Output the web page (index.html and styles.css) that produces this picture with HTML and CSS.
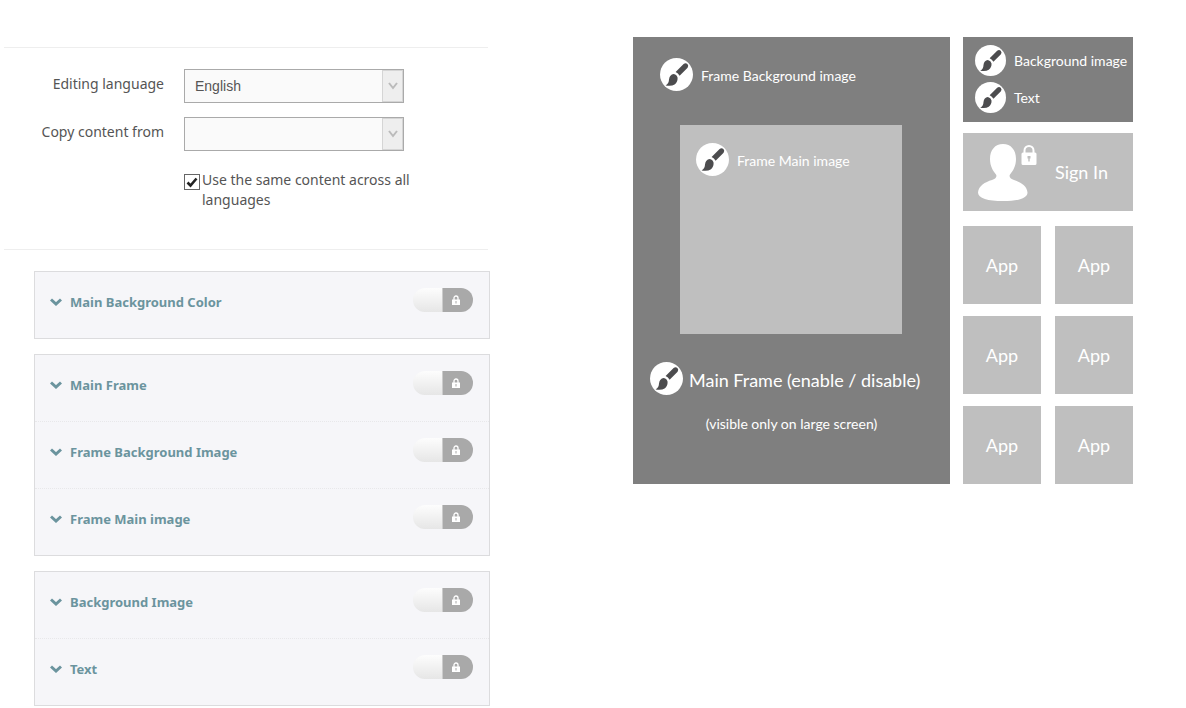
FILE: index.html
```html
<!DOCTYPE html>
<html lang="en">
<head>
  <meta charset="UTF-8">
  <meta name="viewport" content="width=device-width, initial-scale=1.0">
  <title>Appearance Settings</title>
  <link rel="stylesheet" href="styles.css">
</head>
<body>
  <!-- Shared icons -->
  <svg class="sprite" aria-hidden="true">
    <symbol id="brush" viewBox="0 0 33 33">
      <circle cx="16.500" cy="16.500" r="16.500" fill="#fff"/>
      <path d="M15.600 14 L23.600 6 Q25.600 4.500 27.400 6 Q29 7.800 27.600 9.800 L19.600 17.800 Q18.200 15.200 15.600 14 Z" fill="#4c4c4e"/>
      <path d="M13.700 16 Q17 16.800 17.600 19.700 Q17.800 24 14.600 26.400 Q11.500 28.500 5.600 27.400 Q9 25.500 9 21.500 Q9.600 16.600 13.700 16 Z" fill="#4c4c4e"/>
    </symbol>
    <symbol id="chevron" viewBox="0 0 12 8">
      <path d="M1 1.500 L6 6 L11 1.500" fill="none" stroke="currentColor" stroke-width="3"/>
    </symbol>
    <symbol id="lock" viewBox="0 0 8 10">
      <path d="M2 5 V3 a2 2 0 0 1 4 0 V5" fill="none" stroke="currentColor" stroke-width="1.300"/>
      <path d="M0 4.500 H8 V10 H0 Z M3.500 6 V8.500 H4.500 V6 Z" fill="currentColor" fill-rule="evenodd"/>
    </symbol>
  </svg>

  <div class="page">
    <div class="editor">
      <form class="language-form">
        <label class="field-label" for="editLang">Editing language</label>
        <div class="select-box">
          <select id="editLang">
            <option>English</option>
          </select>
          <span class="select-arrow"><svg width="10" height="8" viewBox="0 0 10 8"><path d="M1 1 L5 6 L9 1" fill="none" stroke="#bbb" stroke-width="2"/></svg></span>
        </div>

        <label class="field-label" for="copyFrom">Copy content from</label>
        <div class="select-box">
          <select id="copyFrom">
            <option></option>
            <option>English</option>
          </select>
          <span class="select-arrow"><svg width="10" height="8" viewBox="0 0 10 8"><path d="M1 1 L5 6 L9 1" fill="none" stroke="#bbb" stroke-width="2"/></svg></span>
        </div>

        <label class="same-content">
          <span class="check-box">
            <input type="checkbox" checked>
            <svg class="check-mark" viewBox="0 0 16 16"><path d="M3.500 8.500 L6.500 11.500 L12.500 4.500" fill="none" stroke="#222" stroke-width="2.600"/></svg>
          </span>
          <span>Use the same content across all languages</span>
        </label>
      </form>

      <div class="panels">
        <div class="panel">
          <div class="panel-row">
            <button class="panel-title" type="button"><svg class="chevron"><use href="#chevron"/></svg>Main Background Color</button>
            <label class="toggle"><input type="checkbox" aria-label="Lock Main Background Color"><svg class="toggle-lock"><use href="#lock"/></svg></label>
          </div>
        </div>

        <div class="panel">
          <div class="panel-row">
            <button class="panel-title" type="button"><svg class="chevron"><use href="#chevron"/></svg>Main Frame</button>
            <label class="toggle"><input type="checkbox" aria-label="Lock Main Frame"><svg class="toggle-lock"><use href="#lock"/></svg></label>
          </div>
          <div class="panel-row">
            <button class="panel-title" type="button"><svg class="chevron"><use href="#chevron"/></svg>Frame Background Image</button>
            <label class="toggle"><input type="checkbox" aria-label="Lock Frame Background Image"><svg class="toggle-lock"><use href="#lock"/></svg></label>
          </div>
          <div class="panel-row">
            <button class="panel-title" type="button"><svg class="chevron"><use href="#chevron"/></svg>Frame Main image</button>
            <label class="toggle"><input type="checkbox" aria-label="Lock Frame Main image"><svg class="toggle-lock"><use href="#lock"/></svg></label>
          </div>
        </div>

        <div class="panel">
          <div class="panel-row">
            <button class="panel-title" type="button"><svg class="chevron"><use href="#chevron"/></svg>Background Image</button>
            <label class="toggle"><input type="checkbox" aria-label="Lock Background Image"><svg class="toggle-lock"><use href="#lock"/></svg></label>
          </div>
          <div class="panel-row">
            <button class="panel-title" type="button"><svg class="chevron"><use href="#chevron"/></svg>Text</button>
            <label class="toggle"><input type="checkbox" aria-label="Lock Text"><svg class="toggle-lock"><use href="#lock"/></svg></label>
          </div>
        </div>
      </div>
    </div>

    <!-- Layout preview -->
    <div class="preview">
      <div class="main-frame">
        <div class="edit-item frame-background"><svg class="brush"><use href="#brush"/></svg><span>Frame Background image</span></div>
        <div class="main-image">
          <div class="edit-item"><svg class="brush"><use href="#brush"/></svg><span>Frame Main image</span></div>
        </div>
        <div class="edit-item frame-toggle"><svg class="brush"><use href="#brush"/></svg><span>Main Frame (enable / disable)</span></div>
        <div class="frame-note">(visible only on large screen)</div>
      </div>

      <div class="side">
        <div class="side-header">
          <div class="edit-item"><svg class="brush brush-small"><use href="#brush"/></svg><span>Background image</span></div>
          <div class="edit-item"><svg class="brush brush-small"><use href="#brush"/></svg><span>Text</span></div>
        </div>
        <div class="sign-in">
          <svg class="user-icon" viewBox="0 0 60 58" fill="#fff">
            <path d="M25 1 C33 1 38 7 38 16 C38 23 35 28 32 31.500 C30.500 34 33 36 36 37 C43 39 49 43 49.500 49.500 C49.500 55.500 40 58 25 58 C10 58 0 55.500 0 49.500 C0.500 43 7 39 14 37 C17 36 19.500 34 18 31.500 C15 28 12 23 12 16 C12 7 17 1 25 1 Z"/>
            <path d="M46.500 11 V7.500 a4.500 4.500 0 0 1 9 0 V11" fill="none" stroke="#fff" stroke-width="2"/>
            <path fill-rule="evenodd" d="M45 9.500 H57 Q58.500 9.500 58.500 11 V20.500 Q58.500 22 57 22 H45 Q43.500 22 43.500 20.500 V11 Q43.500 9.500 45 9.500 Z M49.500 13 V15.500 H50.300 V18.500 H51.700 V15.500 H52.500 V13 Z"/>
          </svg>
          <span class="sign-in-text">Sign In</span>
        </div>
        <div class="apps">
          <div class="app">App</div>
          <div class="app">App</div>
          <div class="app">App</div>
          <div class="app">App</div>
          <div class="app">App</div>
          <div class="app">App</div>
        </div>
      </div>
    </div>
  </div>
</body>
</html>
```
FILE: styles.css
```css
* {
  box-sizing: border-box;
}

body {
  margin: 0;
  background: #fff;
  color: #555;
  font-family: "Noto Sans", sans-serif;
  font-size: 14px;
  line-height: 20px;
}

.sprite {
  display: none;
}

.page {
  display: grid;
  grid-template-columns: 486fr 500fr;
  column-gap: 143px;
  align-items: start;
  padding: 0 53px 0 4px;
}

/* Language form */
.editor {
  padding-top: 47px;
}

.language-form {
  display: grid;
  grid-template-columns: 160px 1fr;
  gap: 14px 20px;
  margin-right: 2px;
  padding: 21px 0 39px;
  border-top: 1px solid #eee;
  border-bottom: 1px solid #eee;
}

.field-label {
  padding-top: 5px;
  text-align: right;
}

.select-box {
  position: relative;
  max-width: 220px;
}

.select-box select {
  display: block;
  width: 100%;
  height: 34px;
  padding: 0 32px 0 10px;
  border: 1px solid #aaa;
  border-radius: 0;
  background: #fafafa;
  color: #555;
  font-family: "Liberation Sans", Arial, sans-serif;
  font-size: 14px;
  appearance: none;
}

.select-arrow {
  position: absolute;
  top: 1px;
  right: 1px;
  bottom: 1px;
  display: flex;
  align-items: center;
  justify-content: center;
  width: 21px;
  border: 1px solid #d5d5d5;
  background: #eee;
  pointer-events: none;
}

.same-content {
  grid-column: 2;
  display: flex;
  align-items: flex-start;
  gap: 2px;
  max-width: 240px;
  padding-top: 5px;
}

.check-box {
  position: relative;
  flex: none;
  width: 16px;
  height: 16px;
  margin-top: 4px;
}

.check-box input {
  display: block;
  width: 16px;
  height: 16px;
  margin: 0;
  border: 1px solid #666;
  background: #fff;
  appearance: none;
}

.check-mark {
  position: absolute;
  inset: 0;
  display: none;
  pointer-events: none;
}

.check-box input:checked + .check-mark {
  display: block;
}

/* Settings panels */
.panels {
  display: flex;
  flex-direction: column;
  gap: 15px;
  margin: 21px 0 0 30px;
}

.panel {
  border: 1px solid #dcdcde;
  background: #f6f6f9;
}

.panel-row {
  display: flex;
  align-items: flex-start;
  justify-content: space-between;
  padding: 16px 16px 22px;
}

.panel-row + .panel-row {
  border-top: 1px dotted #e8e8ea;
}

.panel-title {
  display: flex;
  align-items: center;
  gap: 8px;
  padding: 0;
  border: none;
  background: none;
  color: #6b949e;
  font-family: inherit;
  font-size: 13px;
  font-weight: bold;
  line-height: 28px;
  cursor: pointer;
}

.chevron {
  width: 12px;
  height: 8px;
  margin-left: -1px;
}

.toggle {
  position: relative;
}

.toggle input {
  display: block;
  width: 60px;
  height: 24px;
  margin: 0;
  border-radius: 12px;
  background: linear-gradient(to right, transparent 29px, #ccc 29px, #ccc 30px, #a9a9a9 30px), linear-gradient(#fdfdfd, #e6e6e6);
  appearance: none;
  cursor: pointer;
}

.toggle-lock {
  position: absolute;
  top: 7px;
  right: 13px;
  width: 8px;
  height: 10px;
  color: #fff;
  pointer-events: none;
}

/* Preview */
.preview {
  display: grid;
  grid-template-columns: 317fr 170fr;
  column-gap: 13px;
  padding-top: 37px;
  color: #fff;
  font-family: Lato, sans-serif;
}

.main-frame {
  padding: 21px 0 50px;
  background: #7f7f7f;
}

.edit-item {
  display: flex;
  align-items: center;
  gap: 8px;
  white-space: nowrap;
}

.main-frame .edit-item span {
  padding-top: 3px;
}

.brush {
  flex: none;
  width: 33px;
  height: 33px;
}

.brush-small {
  width: 31px;
  height: 31px;
}

.frame-background {
  padding-left: 27px;
}

.main-image {
  min-height: 209px;
  margin: 34px 48px 28px 47px;
  padding: 18px 16px;
  background: #bfbfbf;
}

.frame-toggle {
  gap: 6px;
  padding-left: 17px;
  font-size: 18px;
}

.frame-note {
  margin-top: 19px;
  text-align: center;
}

.side-header {
  display: flex;
  flex-direction: column;
  gap: 6px;
  min-height: 85px;
  padding: 8px 0 0 12px;
  background: #7f7f7f;
}

.sign-in {
  display: flex;
  align-items: center;
  gap: 17px;
  height: 78px;
  margin: 11px 0 15px;
  padding-left: 15px;
  background: #bfbfbf;
  font-size: 18px;
}

.user-icon {
  width: 60px;
  height: 58px;
}

.apps {
  display: grid;
  grid-template-columns: 1fr 1fr;
  gap: 12px 14px;
}

.app {
  display: flex;
  align-items: center;
  justify-content: center;
  height: 78px;
  background: #bfbfbf;
  font-size: 18px;
}
```
